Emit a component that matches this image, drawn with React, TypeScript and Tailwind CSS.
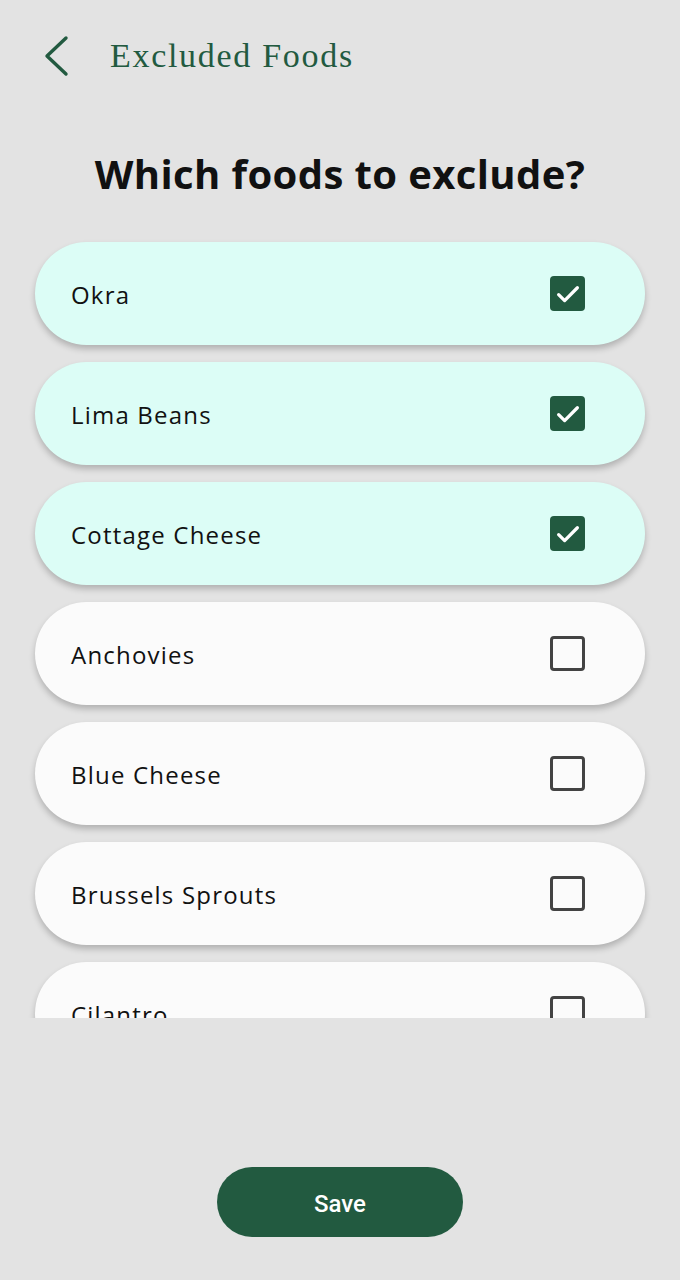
import React from "react";

const items = [
  { name: "Okra", checked: true },
  { name: "Lima Beans", checked: true },
  { name: "Cottage Cheese", checked: true },
  { name: "Anchovies", checked: false },
  { name: "Blue Cheese", checked: false },
  { name: "Brussels Sprouts", checked: false },
  { name: "Cilantro", checked: false },
];

function Check({ checked }: { checked: boolean }) {
  if (checked) {
    return (
      <div className="w-[35px] h-[35px] rounded-[4px] bg-[#225a40] flex items-center justify-center">
        <svg width="30" height="30" viewBox="0 0 24 24" fill="none" stroke="#fff" strokeWidth="2.6" strokeLinecap="round" strokeLinejoin="round">
          <path d="M4.5 12.5l4.8 4.8L19.5 7" />
        </svg>
      </div>
    );
  }
  return <div className="w-[35px] h-[35px] rounded-[4px] border-[3px] border-[#434343]" />;
}

export default function App() {
  return (
    <div className="w-[680px] h-[1280px] bg-[#e3e3e3] flex flex-col overflow-hidden">
      <div className="h-[112px] flex items-center pl-[42px]">
        <svg width="28" height="42" viewBox="0 0 28 42" fill="none" stroke="#225a40" strokeWidth="3.4" strokeLinecap="round" strokeLinejoin="round">
          <path d="M24 3L5 21l19 18" />
        </svg>
        <span className="ml-[40px] text-[34px] tracking-[0.05em] text-[#225a40] leading-none" style={{ fontFamily: '"Liberation Serif", serif' }}>
          Excluded Foods
        </span>
      </div>
      <div className="h-[125px] flex items-center justify-center pb-[2px]">
        <h1 className="text-[40px] tracking-[0.01em] font-bold text-[#111] leading-none" style={{ fontFamily: '"Open Sans", sans-serif' }}>
          Which foods to exclude?
        </h1>
      </div>
      <div className="h-[781px] overflow-hidden px-[35px] pt-[5px] flex flex-col gap-[17px]">
        {items.map((it) => (
          <div
            key={it.name}
            className={`shrink-0 h-[103px] rounded-full flex items-center justify-between pl-[36px] pr-[60px] shadow-[0_4px_6px_rgba(0,0,0,0.22)] ${
              it.checked ? "bg-[#dcfdf6]" : "bg-[#fbfbfb]"
            }`}
          >
            <span className="text-[24px] tracking-[0.05em] text-[#111] pt-[2px]" style={{ fontFamily: '"Open Sans", sans-serif' }}>
              {it.name}
            </span>
            <Check checked={it.checked} />
          </div>
        ))}
      </div>
      <div className="flex-1 flex items-start justify-center pt-[149px]">
        <button className="w-[246px] h-[70px] rounded-full bg-[#225a40] text-white text-[24px] font-medium pt-[3px]" style={{ fontFamily: 'Roboto, sans-serif' }}>
          Save
        </button>
      </div>
    </div>
  );
}
